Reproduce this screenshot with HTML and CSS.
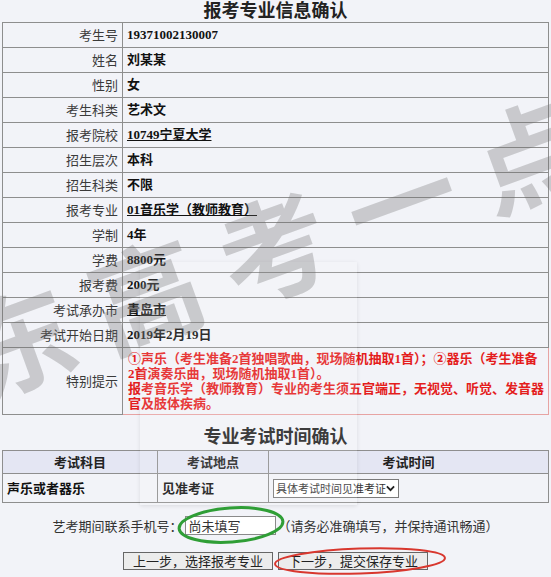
FILE: index.html
```html
<!DOCTYPE html>
<html lang="zh-CN">
<head>
<meta charset="utf-8">
<title>报考专业信息确认</title>
<link rel="stylesheet" href="styles.css">
</head>
<body>
<div class="page">
  <h1 class="title">报考专业信息确认</h1>
  <table class="info">
    <tr><td class="label">考生号</td><td class="value">19371002130007</td></tr>
    <tr><td class="label">姓名</td><td class="value">刘某某</td></tr>
    <tr><td class="label">性别</td><td class="value">女</td></tr>
    <tr><td class="label">考生科类</td><td class="value">艺术文</td></tr>
    <tr><td class="label">报考院校</td><td class="value"><a href="#">10749宁夏大学</a></td></tr>
    <tr><td class="label">招生层次</td><td class="value">本科</td></tr>
    <tr><td class="label">招生科类</td><td class="value">不限</td></tr>
    <tr><td class="label">报考专业</td><td class="value"><a href="#">01音乐学（教师教育）</a></td></tr>
    <tr><td class="label">学制</td><td class="value">4年</td></tr>
    <tr><td class="label">学费</td><td class="value">8800元</td></tr>
    <tr><td class="label">报考费</td><td class="value">200元</td></tr>
    <tr><td class="label">考试承办市</td><td class="value"><a href="#">青岛市</a></td></tr>
    <tr><td class="label">考试开始日期</td><td class="value">2019年2月19日</td></tr>
    <tr class="tip-row"><td class="label">特别提示</td><td class="value tip">①声乐（考生准备2首独唱歌曲，现场随机抽取1首）；②器乐（考生准备<br>2首演奏乐曲，现场随机抽取1首）。<br>报考音乐学（教师教育）专业的考生须五官端正，无视觉、听觉、发音器<br>官及肢体疾病。</td></tr>
  </table>

  <h2 class="title title2">专业考试时间确认</h2>
  <table class="exam">
    <colgroup><col class="c1"><col class="c2"><col class="c3"></colgroup>
    <tr><th>考试科目</th><th>考试地点</th><th>考试时间</th></tr>
    <tr>
      <td>声乐或者器乐</td>
      <td>见准考证</td>
      <td>
        <div class="select">
          <span class="select-text">具体考试时间见准考证</span>
          <svg class="chev" width="10" height="7" viewBox="0 0 10 7"><path d="M1 1.2 L5 5.4 L9 1.2" fill="none" stroke="#222" stroke-width="2"/></svg>
        </div>
      </td>
    </tr>
  </table>

  <div class="phone">
    <span>艺考期间联系手机号：</span>
    <input class="phone-input" type="text" value="尚未填写">
    <span class="hint">（请务必准确填写，并保持通讯畅通）</span>
  </div>

  <div class="buttons">
    <button class="btn" type="button">上一步，选择报考专业</button>
    <button class="btn" type="button">下一步，提交保存专业</button>
  </div>

  <div class="overlay"></div>
  <div class="watermark">东高考一点</div>

  <svg class="marks" width="551" height="577" viewBox="0 0 551 577">
    <ellipse cx="231" cy="525" rx="52" ry="17" fill="none" stroke="#2f9e36" stroke-width="3" transform="rotate(-4 231 525)"/>
    <ellipse cx="360" cy="561" rx="85" ry="12.5" fill="none" stroke="#d8372e" stroke-width="2" transform="rotate(-2 360 561)"/>
  </svg>
</div>
</body>
</html>
```

FILE: styles.css
```css
* { box-sizing: border-box; }

body {
  margin: 0;
  background: #f2f3f8;
  font-family: "Noto Sans CJK SC", sans-serif;
  font-size: 13px;
  color: #222;
}

.page {
  position: relative;
  width: 551px;
  height: 577px;
  overflow: hidden;
}

.title {
  margin: 0;
  height: 22px;
  line-height: 22px;
  text-align: center;
  font-size: 18px;
  font-weight: bold;
  color: #222;
  font-family: "Liberation Serif", "Noto Sans CJK SC", serif;
}

.title2 {
  margin-top: 10px;
  height: 25px;
  line-height: 25px;
}

.info,
.exam {
  margin-left: 2px;
  width: 547px;
  border-collapse: collapse;
}

.info td {
  border: 1px solid #8e8e8e;
  height: 25px;
  padding: 0 4px;
  line-height: 16px;
}

.info .label {
  width: 120px;
  text-align: right;
  color: #3a3a3a;
}

.info .value {
  font-weight: bold;
  font-family: "Liberation Serif", "Noto Sans CJK SC", serif;
  color: #111;
}

.value a {
  color: #111;
  text-decoration: underline;
}

.info .tip {
  color: #e41d1d;
  line-height: 15px;
  padding: 3px 4px 3px 5px;
  white-space: nowrap;
  border-color: #e7a3a3;
}

.tip-row td { height: 66px; }

.exam .c1 { width: 155px; }
.exam .c2 { width: 111px; }

.exam th {
  height: 23px;
  background: #e4e6f3;
  border: 1px solid #8e8e8e;
  font-weight: bold;
  color: #222;
  text-align: center;
  padding: 0;
  line-height: 16px;
}

.exam td {
  height: 29px;
  border: 1px solid #8e8e8e;
  font-weight: bold;
  padding: 0 4px;
  color: #111;
  line-height: 16px;
}

.select {
  display: flex;
  align-items: center;
  justify-content: space-between;
  width: 126px;
  height: 19px;
  padding: 0 3px 0 2px;
  background: #fff;
  border: 1px solid #7a7a7a;
  font-weight: normal;
  font-size: 11px;
  color: #333;
  white-space: nowrap;
}

.select-text { line-height: 15px; }

.phone {
  display: flex;
  justify-content: center;
  align-items: center;
  height: 44px;
  color: #333;
}

.phone-input {
  width: 91px;
  height: 19px;
  margin: 0 2px;
  padding: 0 3px;
  border: 1px solid #8a8a8a;
  background: #fff;
  font-family: "Noto Sans CJK SC", sans-serif;
  font-size: 13px;
  color: #333;
}

.buttons {
  display: flex;
  justify-content: center;
  gap: 5px;
  margin-top: 5px;
}

.btn {
  height: 18px;
  padding: 0 9px;
  background: #ececec;
  border: 1px solid #666;
  font-family: "Noto Sans CJK SC", sans-serif;
  font-size: 13px;
  line-height: 16px;
  color: #222;
}

.overlay {
  position: absolute;
  left: 140px;
  top: 262px;
  width: 217px;
  height: 243px;
  background: rgba(255, 255, 255, 0.12);
  box-shadow: 0 1px 4px rgba(0, 0, 0, 0.1);
  pointer-events: none;
}

.watermark {
  position: absolute;
  left: 272px;
  top: 243px;
  transform: translate(-50%, -50%) rotate(-20deg);
  padding-left: 26px;
  font-size: 110px;
  letter-spacing: 26px;
  line-height: 1;
  white-space: nowrap;
  font-weight: bold;
  color: rgba(105, 105, 105, 0.3);
  pointer-events: none;
}

.marks {
  position: absolute;
  left: 0;
  top: 0;
  pointer-events: none;
}
```
